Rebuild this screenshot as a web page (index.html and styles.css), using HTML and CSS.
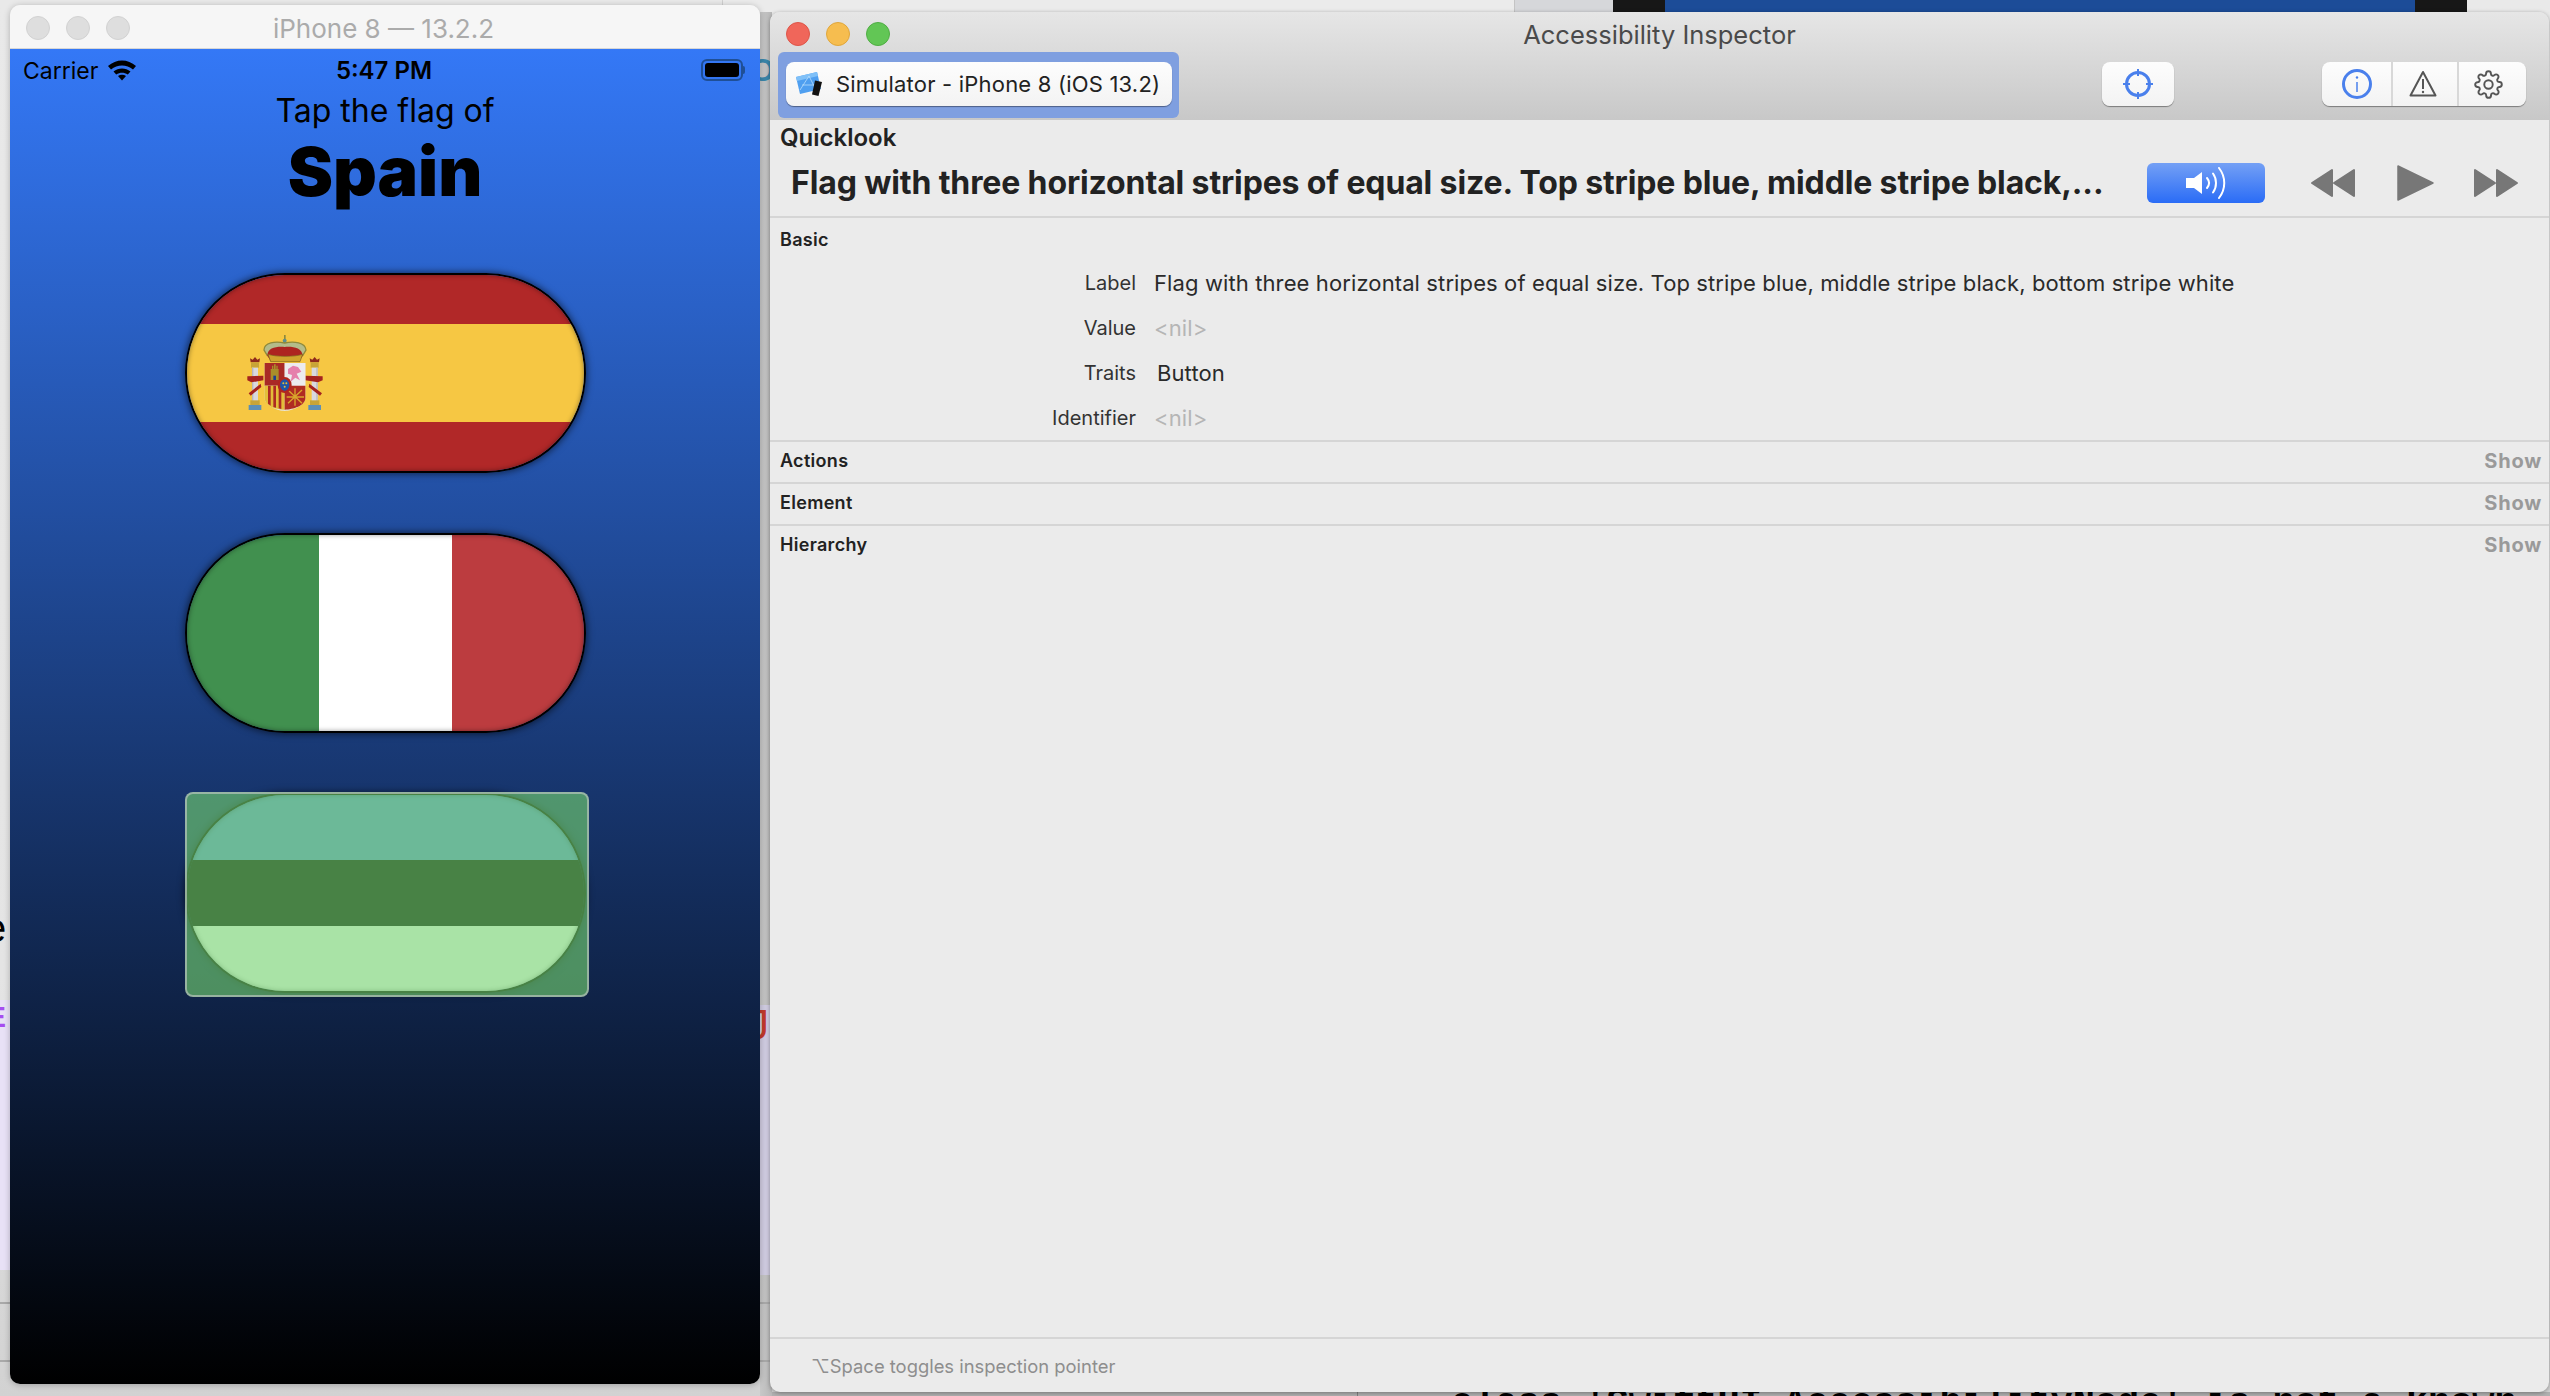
FILE: index.html
```html
<!DOCTYPE html>
<html lang="en">
<head>
<meta charset="utf-8">
<title>Accessibility Inspector</title>
<link rel="stylesheet" href="styles.css">
</head>
<body>
<div class="desktop">
  <div class="bg-top-a"></div>
  <div class="bg-top-black-a"></div>
  <div class="bg-top-blue"></div>
  <div class="bg-top-black-b"></div>
  <div class="bg-top-c"></div>
  <div class="bg-gutter"></div>
  <div class="bg-lav-left"></div>
  <div class="bg-lav-mid"></div>
  <div class="bg-line bg-line-a"></div>
  <div class="bg-line bg-line-b"></div>
  <div class="bg-under"></div>
  <div class="bg-under-rule"></div>
  <span class="frag frag-o">O</span>
  <span class="frag frag-e">e</span>
  <span class="frag frag-j">J</span>
  <span class="frag frag-p">E</span>
  <span class="frag-code">class 'SwiftUI.AccessibilityNode' is not a known</span>

  <section class="sim">
    <header class="sim-title">
      <div class="lights"><i class="light-off"></i><i class="light-off"></i><i class="light-off"></i></div>
      <div class="sim-title-text">iPhone 8 — 13.2.2</div>
    </header>
    <div class="screen">
      <div class="status">
        <div class="status-left">
          <span>Carrier</span>
          <svg class="wifi" viewBox="0 0 30 22"><path d="M1 7C9 -.5 21 -.5 29 7L26 10.500C19.500 5 10.500 5 4 10.500Z"/><path d="M6.500 12.500C11.500 8.500 18.500 8.500 23.500 12.500L20.800 15.500C17 13 13 13 9.200 15.500Z"/><path d="M11 17C13.500 15.400 16.500 15.400 19 17L15 21.500Z"/></svg>
        </div>
        <div class="status-time">5:47 PM</div>
        <div class="status-right">
          <div class="battery"><div class="battery-fill"></div></div><div class="battery-nub"></div>
        </div>
      </div>
      <div class="prompt">Tap the flag of</div>
      <div class="country">Spain</div>
      <div class="flags">
        <div class="flag-slot">
          <div class="pill pill-rows">
            <div class="s-red"></div><div class="s-yellow"></div><div class="s-red"></div>
          </div>
          <svg class="arms" viewBox="0 0 225 228">
            <g fill="#8f8a3c">
              <rect x="108" y="0" width="5" height="24"/>
              <circle cx="110" cy="17" r="6" fill="#5f8f8c"/>
            </g>
            <path d="M48 45C48 22 82 18 110 24C138 18 172 22 174 45L164 62H58Z" fill="#b3bc8a" stroke="#8f8a3c" stroke-width="4"/>
            <path d="M58 62C58 38 86 34 110 36C134 34 162 38 164 62L154 78H68Z" fill="#ad2420"/>
            <path d="M60 58L68 80H156L164 58C140 66 84 66 60 58Z" fill="#cfa32d" stroke="#7a5f20" stroke-width="2"/>
            <g>
              <path d="M8 82L6 70L14 74L21 66L28 74L36 70L34 82Z" fill="#8e2a1c"/>
              <rect x="9" y="82" width="24" height="16" fill="#c8a437"/>
              <rect x="12" y="98" width="18" height="100" fill="#d9d9de"/>
              <rect x="12" y="98" width="4" height="100" fill="#b8b8bf"/>
              <rect x="7" y="196" width="28" height="14" fill="#c8a437"/>
              <rect x="2" y="210" width="38" height="15" fill="#5d8fb5"/>
              <path d="M187 82L185 70L193 74L200 66L207 74L215 70L213 82Z" fill="#8e2a1c"/>
              <rect x="188" y="82" width="24" height="16" fill="#c8a437"/>
              <rect x="191" y="98" width="18" height="100" fill="#d9d9de"/>
              <rect x="205" y="98" width="4" height="100" fill="#b8b8bf"/>
              <rect x="186" y="196" width="28" height="14" fill="#c8a437"/>
              <rect x="181" y="210" width="38" height="15" fill="#5d8fb5"/>
            </g>
            <path d="M-2 124L46 122V136L10 142L-2 136ZM224 124L172 122V136L210 142L224 136Z" fill="#a5231f"/>
            <path d="M2 175L38 146L40 156L8 182ZM222 175L184 146L182 156L216 182Z" fill="#a5231f"/>
            <path d="M50 84H172V190C172 212 130 228 110 228C90 228 50 212 50 190Z" fill="#e7e4dc"/>
            <rect x="50" y="84" width="60" height="68" fill="#a92a26"/>
            <rect x="110" y="84" width="62" height="68" fill="#ecebee"/>
            <path d="M50 152H110V224C80 224 50 212 50 190Z" fill="#e3bd3a"/>
            <path d="M60 152H68V212L60 206ZM76 152H84V218L76 216ZM92 152H100V222L92 220Z" fill="#ad2a22"/>
            <path d="M110 152H172V190C172 212 135 224 110 224Z" fill="#b02c22"/>
            <path d="M120 165L162 205M162 165L120 205M141 160V212M116 186H168" stroke="#d9a72c" stroke-width="4" fill="none"/>
            <path d="M68 102H92V135H68Z" fill="#a98e2a"/>
            <path d="M72 92H76V102H72ZM78 88H83V102H78ZM85 92H89V102H85Z" fill="#a98e2a"/>
            <rect x="76" y="122" width="8" height="13" fill="#1d3f8f"/>
            <path d="M120 102L135 92L150 96L160 110L146 116L156 136L142 128L128 140L132 120L120 116Z" fill="#e57fac"/>
            <ellipse cx="110" cy="150" rx="21" ry="24" fill="#b1261f"/>
            <ellipse cx="110" cy="150" rx="14" ry="17" fill="#1f55a8"/>
            <circle cx="106" cy="145" r="3" fill="#e3bd3a"/><circle cx="115" cy="145" r="3" fill="#e3bd3a"/><circle cx="110" cy="155" r="3" fill="#e3bd3a"/>
          </svg>
        </div>
        <div class="flag-slot">
          <div class="pill pill-cols">
            <div class="s-green"></div><div class="s-white"></div><div class="s-rust"></div>
          </div>
        </div>
        <div class="flag-slot">
          <div class="pill pill-thirds">
            <div class="s-blue"></div><div class="s-black"></div><div class="s-white"></div>
          </div>
          <div class="focus-box"></div>
        </div>
      </div>
    </div>
  </section>

  <section class="inspector">
    <header class="toolbar">
      <div class="toolbar-title">
        <div class="lights lights-on"><i class="light-red"></i><i class="light-yellow"></i><i class="light-green"></i></div>
        <div class="inspector-name">Accessibility Inspector</div>
        <div></div>
      </div>
      <div class="toolbar-row">
        <div class="device-btn">
          <svg class="device-icon" viewBox="0 0 30 26">
            <path d="M1 6L22 1L26 18L5 23Z" fill="#4f9ff0"/>
            <path d="M1 6L22 1L23 5L2 10Z" fill="#7fc0f8"/>
            <path d="M5 19L14 5M14 5L20 17M7 14H19" stroke="#b5dcfb" stroke-width=".8" fill="none"/>
            <path d="M20 9.500L27 11L23.500 25L17 23.500Z" fill="#111"/>
          </svg>
          <span class="device-name">Simulator - iPhone 8 (iOS 13.2)</span>
        </div>
        <div class="tool-btn tool-target">
          <svg class="icon-30" viewBox="0 0 30 30"><circle cx="15" cy="15" r="11.500" fill="none" stroke="#4a80ec" stroke-width="3"/><path d="M15 0V7M15 23V30M0 15H7M23 15H30" stroke="#4a80ec" stroke-width="2"/></svg>
        </div>
        <div class="tool-group">
          <div class="tool-cell">
            <svg class="icon-30" viewBox="0 0 30 30"><circle cx="15" cy="15" r="13.500" fill="none" stroke="#4a80ec" stroke-width="3"/><path d="M15 13V23" stroke="#4a80ec" stroke-width="1.500"/><circle cx="15" cy="8.500" r="1.200" fill="#4a80ec"/></svg>
          </div>
          <div class="tool-cell cell-warn">
            <svg class="icon-30" viewBox="0 0 30 30"><path d="M15 3L27.500 26.500H2.500Z" fill="none" stroke="#555" stroke-width="2" stroke-linejoin="round"/><path d="M15 10V20" stroke="#555" stroke-width="2"/><circle cx="15" cy="23" r="1.200" fill="#555"/></svg>
          </div>
          <div class="tool-cell cell-gear">
            <svg class="icon-gear" viewBox="0 0 24 24" fill="none" stroke="#555" stroke-width="1.600"><circle cx="12" cy="12" r="3.500"/><path d="M19.400 15a1.650 1.650 0 0 0 .33 1.820l.06.06a2 2 0 0 1 0 2.830 2 2 0 0 1-2.830 0l-.06-.06a1.650 1.650 0 0 0-1.820-.33 1.650 1.650 0 0 0-1 1.510V21a2 2 0 0 1-2 2 2 2 0 0 1-2-2v-.09A1.650 1.650 0 0 0 9 19.400a1.650 1.650 0 0 0-1.820.33l-.06.06a2 2 0 0 1-2.830 0 2 2 0 0 1 0-2.830l.06-.06a1.650 1.650 0 0 0 .33-1.820 1.650 1.650 0 0 0-1.510-1H3a2 2 0 0 1-2-2 2 2 0 0 1 2-2h.09A1.650 1.650 0 0 0 4.600 9a1.650 1.650 0 0 0-.33-1.820l-.06-.06a2 2 0 0 1 0-2.830 2 2 0 0 1 2.830 0l.06.06a1.650 1.650 0 0 0 1.820.33H9a1.650 1.650 0 0 0 1-1.510V3a2 2 0 0 1 2-2 2 2 0 0 1 2 2v.09a1.650 1.650 0 0 0 1 1.510 1.650 1.650 0 0 0 1.820-.33l.06-.06a2 2 0 0 1 2.830 0 2 2 0 0 1 0 2.830l-.06.06a1.650 1.650 0 0 0-.33 1.820V9a1.650 1.650 0 0 0 1.510 1H21a2 2 0 0 1 2 2 2 2 0 0 1-2 2h-.09a1.650 1.650 0 0 0-1.510 1z"/></svg>
          </div>
        </div>
      </div>
    </header>

    <div class="quicklook">
      <div class="ql-title">Quicklook</div>
      <div class="ql-row">
        <div class="ql-text">Flag with three horizontal stripes of equal size. Top stripe blue, middle stripe black,...</div>
        <div class="speak-btn">
          <svg class="speak-icon" viewBox="0 0 42 32"><path d="M1 11H9L17 5V27L9 21H1Z" fill="#fff"/><g fill="none" stroke="#fff" stroke-width="2" stroke-linecap="round"><path d="M22 11C24.500 14 24.500 18 22 21"/><path d="M28 6.500C32 12 32 20 28 25.500"/><path d="M34 1C41 10 41 22 34 31"/></g></svg>
        </div>
        <svg class="skip" viewBox="0 0 48 30"><path d="M23 2V28L3 15ZM45 2V28L25 15Z" fill="#777" stroke="#777" stroke-width="2" stroke-linejoin="round"/></svg>
        <svg class="play" viewBox="0 0 37 36"><path d="M1 1V35L36 18Z" fill="#777" stroke="#777" stroke-width="1.500" stroke-linejoin="round"/></svg>
        <svg class="skip" viewBox="0 0 48 30"><path d="M3 2V28L23 15ZM25 2V28L45 15Z" fill="#777" stroke="#777" stroke-width="2" stroke-linejoin="round"/></svg>
      </div>
    </div>

    <div class="section section-basic">
      <div class="sec-title">Basic</div>
      <div class="props">
        <div class="prop-key">Label</div><div class="prop-val">Flag with three horizontal stripes of equal size. Top stripe blue, middle stripe black, bottom stripe white</div>
        <div class="prop-key">Value</div><div class="prop-val nil">&lt;nil&gt;</div>
        <div class="prop-key">Traits</div><div class="prop-val trait">Button</div>
        <div class="prop-key">Identifier</div><div class="prop-val nil">&lt;nil&gt;</div>
      </div>
    </div>
    <div class="section section-row"><div class="sec-title">Actions</div><div class="show">Show</div></div>
    <div class="section section-row"><div class="sec-title">Element</div><div class="show">Show</div></div>
    <div class="section section-row section-last"><div class="sec-title">Hierarchy</div><div class="show">Show</div></div>

    <footer class="foot">⌥Space toggles inspection pointer</footer>
  </section>
</div>
</body>
</html>
```

FILE: styles.css
```css
* { box-sizing: border-box; }
html, body { margin: 0; padding: 0; }
body { width: 2550px; height: 1396px; overflow: hidden; font-family: Inter, "DejaVu Sans", sans-serif; }

.desktop { position: relative; width: 2550px; height: 1396px; overflow: hidden; background: linear-gradient(#e9e9e9, #e4e4e4 70%, #d2d2d2); }

/* desktop remnants behind the windows */
.bg-top-a { position: absolute; left: 722px; top: 0; width: 792px; height: 12px; background: #ebebeb; border-left: 1px solid #d0d0d0; }
.bg-top-black-a { position: absolute; left: 1613px; top: 0; width: 52px; height: 12px; background: #171717; }
.bg-top-blue { position: absolute; left: 1665px; top: 0; width: 750px; height: 12px; background: #1c4c98; }
.bg-top-black-b { position: absolute; left: 2415px; top: 0; width: 52px; height: 12px; background: #171717; }
.bg-top-c { position: absolute; left: 1514px; top: 0; width: 99px; height: 12px; background: #d6d7da; border-left: 1px solid #c4c4c4; }
.bg-gutter { position: absolute; left: 760px; top: 12px; width: 12px; height: 1384px; background: linear-gradient(90deg, #c8c8c8, #b8b8b8); }
.bg-lav-left { position: absolute; left: 0; top: 1000px; width: 10px; height: 270px; background: #e8e1f6; }
.bg-lav-mid { position: absolute; left: 760px; top: 1005px; width: 10px; height: 270px; background: #cfcbe0; }
.bg-line { position: absolute; left: 0; width: 772px; height: 2px; background: #a9a9a9; }
.bg-line-a { top: 1302px; }
.bg-line-b { top: 1360px; }
.bg-under { position: absolute; left: 772px; top: 1392px; width: 1778px; height: 4px; background: #b0b0b0; }
.bg-under-rule { position: absolute; left: 1357px; top: 1392px; width: 1px; height: 4px; background: #808080; }
.frag { position: absolute; line-height: 1; font-family: "Liberation Sans", sans-serif; }
.frag-o { left: 750px; top: 54px; font-size: 32px; font-weight: 700; color: #3a86aa; }
.frag-e { left: -16px; top: 908px; font-size: 40px; color: #000; }
.frag-j { left: 748px; top: 1004px; font-size: 42px; color: #c0392b; }
.frag-p { left: -14px; top: 1002px; font-size: 30px; font-weight: 700; color: #a64df0; }
.frag-code { position: absolute; left: 1451px; top: 1385px; font: 700 37px/1 "Liberation Mono", monospace; color: #000; white-space: pre; }

/* iOS simulator window */
.sim { position: absolute; left: 10px; top: 5px; width: 750px; height: 1379px; border-radius: 10px; overflow: hidden; display: flex; flex-direction: column; box-shadow: 0 1px 6px rgba(0,0,0,.25); }
.sim-title { position: relative; flex: none; height: 44px; padding-top: 4px; background: #f6f6f6; border-bottom: 1px solid #d6d6d6; display: flex; align-items: center; justify-content: center; }
.sim-title-text { font-size: 26px; color: #ababab; line-height: 28px; margin-right: 3px; }
.lights { display: flex; gap: 16px; }
.lights i { display: block; width: 24px; height: 24px; border-radius: 50%; }
.sim-title .lights { position: absolute; left: 16px; top: 11px; }
.light-off { background: #dedede; border: 1px solid #d2d2d2; }
.light-red { background: #f0665a; border: 1px solid #dd5548; }
.light-yellow { background: #f6bd4f; border: 1px solid #dfa63c; }
.light-green { background: #62c655; border: 1px solid #50ad44; }

.screen { flex: 1; background: linear-gradient(#3478f6, #000); display: flex; flex-direction: column; color: #000; }
.status { flex: none; display: grid; grid-template-columns: 1fr auto 1fr; align-items: center; height: 40px; padding: 4px 15px 0 13px; font-size: 23px; line-height: 28px; }
.status-left { display: flex; align-items: center; gap: 9px; }
.wifi { width: 30px; height: 22px; fill: #000; margin-top: -2px; }
.status-time { font-size: 24px; font-weight: 600; }
.status-right { display: flex; align-items: center; justify-content: flex-end; }
.battery { width: 42px; height: 22px; border: 2px solid #1f4f96; border-radius: 6px; padding: 2px; margin-top: -2px; }
.battery-fill { width: 100%; height: 100%; background: #000; border-radius: 3px; }
.battery-nub { width: 2px; height: 8px; background: #1f4f96; border-radius: 0 2px 2px 0; margin-top: -2px; }
.prompt { flex: none; text-align: center; font-size: 32px; padding-top: 2px; line-height: 40px; height: 42px; }
.country { flex: none; text-align: center; font-size: 68px; font-weight: 900; line-height: 80px; height: 80px; }
.flags { margin-top: 62px; margin-left: 175px; width: 401px; display: flex; flex-direction: column; gap: 60px; }
.flag-slot { position: relative; height: 200px; }
.pill { position: relative; height: 200px; border: 2px solid #000; border-radius: 100px; overflow: hidden; display: flex; box-shadow: 0 0 7px 1px rgba(0,0,0,.55); }
.pill::after { content: ""; position: absolute; inset: 0; border-radius: 98px; box-shadow: inset 0 0 5px rgba(0,0,0,.4); }
.pill-rows, .pill-thirds { flex-direction: column; }
.pill-rows > div:nth-child(1), .pill-rows > div:nth-child(3) { flex: 1; }
.pill-rows > div:nth-child(2) { flex: 2; }
.pill-thirds > div, .pill-cols > div { flex: 1; }
.s-red { background: #b12828; }
.s-yellow { background: #f6c743; }
.s-green { background: #41904f; }
.s-white { background: #fff; }
.s-rust { background: #bc3c3f; }
.s-blue { background: #5f91da; }
.s-black { background: #000; }
.arms { position: absolute; left: 63px; top: 62px; width: 75px; height: 76px; overflow: visible; }
.focus-box { position: absolute; left: 0; top: -1px; right: -3px; bottom: -4px; border: 2px solid rgba(190,200,195,.65); border-radius: 8px; background: rgba(116,210,111,.62); }

/* Accessibility Inspector window */
.inspector { position: absolute; left: 770px; top: 12px; width: 1779px; height: 1380px; border-radius: 10px; overflow: hidden; background: #ebebeb; display: flex; flex-direction: column; box-shadow: 0 1px 4px rgba(0,0,0,.35); }
.toolbar { flex: none; height: 108px; background: linear-gradient(#e6e6e6, #c8c8c8); }
.toolbar-title { height: 50px; padding: 10px 16px 0; display: grid; grid-template-columns: 1fr auto 1fr; }
.inspector-name { font-size: 25.500px; line-height: 25px; color: #4a4a4a; }
.toolbar-row { height: 44px; padding: 0 23px 0 16px; display: flex; }
.device-btn { position: relative; z-index: 0; flex: none; width: 386px; display: flex; align-items: center; gap: 11px; padding-left: 9px; border-radius: 8px; box-shadow: 0 1px 1px rgba(0,0,0,.4); font-size: 22px; color: #222; }
.device-name { letter-spacing: .2px; white-space: nowrap; }
.device-btn::before { content: ""; position: absolute; z-index: -2; inset: -10px -7px -12px -8px; border-radius: 6px; background: #7f9fe0; }
.device-btn::after { content: ""; position: absolute; z-index: -1; inset: 0; border-radius: 8px; background: linear-gradient(#fdfdfd, #f3f3f3); box-shadow: 0 1px 1px rgba(0,0,0,.4); }
.device-icon { width: 30px; height: 26px; flex: none; }
.tool-btn, .tool-group { display: flex; background: linear-gradient(#fdfdfd, #f3f3f3); border-radius: 8px; box-shadow: 0 1px 1px rgba(0,0,0,.4); }
.tool-target { width: 72px; margin-left: auto; align-items: center; justify-content: center; }
.tool-group { width: 204px; margin-left: 148px; display: grid; grid-template-columns: 69px 66px 69px; }
.tool-cell { display: flex; align-items: center; justify-content: center; border-left: 2px solid #d8d8d8; }
.tool-cell:first-child { border-left: 0; }
.cell-warn { padding-right: 4px; }
.cell-gear { padding-right: 8px; }
.icon-30 { width: 30px; height: 30px; }
.icon-gear { width: 29px; height: 29px; }

.quicklook { flex: none; height: 98px; border-bottom: 2px solid #d5d5d5; padding-top: 4px; }
.ql-title { padding-left: 10px; font-size: 24px; font-weight: 600; line-height: 28px; color: #222; }
.ql-row { display: flex; align-items: center; height: 44px; margin-top: 9px; padding-left: 21px; }
.ql-text { flex: none; width: 1356px; padding-bottom: 1px; font-size: 32px; font-weight: 700; letter-spacing: -.13px; line-height: 40px; color: #222; white-space: nowrap; }
.speak-btn { flex: none; width: 118px; height: 40px; border-radius: 6px; background: linear-gradient(#74a0f5, #2a6cf6); display: flex; align-items: center; justify-content: center; }
.speak-icon { width: 42px; height: 32px; }
.skip { flex: none; width: 48px; height: 30px; margin-left: 44px; }
.play { flex: none; width: 37px; height: 36px; margin-left: 40px; margin-right: -4px; }
.ql-row .play + .skip { margin-left: 42px; }

.section { flex: none; padding-left: 10px; border-bottom: 2px solid #d5d5d5; }
.section-basic { height: 224px; padding-top: 10px; }
.sec-title { font-size: 18px; font-weight: 600; line-height: 24px; color: #222; letter-spacing: .3px; }
.props { display: grid; grid-template-columns: 356px 1fr; column-gap: 18px; grid-auto-rows: 45px; margin-top: 9px; font-size: 20px; line-height: 45px; }
.prop-key { text-align: right; color: #333; }
.prop-val { font-size: 22px; color: #2a2a2a; white-space: nowrap; letter-spacing: .11px; }
.nil { font-size: 22px; color: #b5b5b5; }
.trait { padding-left: 3px; }
.section-row { height: 42px; display: flex; justify-content: space-between; align-items: center; padding-right: 7px; padding-bottom: 3px; }
.section-last { border-bottom: 0; padding-bottom: 5px; }
.show { font-size: 20px; font-weight: 700; color: #9a9a9a; letter-spacing: .8px; }
.foot { flex: none; margin-top: auto; height: 55px; border-top: 2px solid #d5d5d5; padding-left: 41px; font-size: 18.400px; line-height: 54px; color: #8e8e8e; }
```
